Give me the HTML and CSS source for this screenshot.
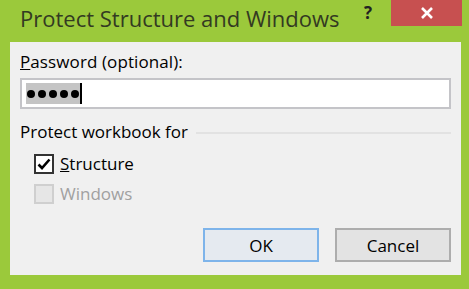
FILE: index.html
```html
<!DOCTYPE html>
<html lang="en">
<head>
  <meta charset="UTF-8">
  <title>Protect Structure and Windows</title>
  <link rel="stylesheet" href="styles.css">
</head>
<body>
  <div class="window">
    <!-- Title bar -->
    <div class="titlebar">
      <span class="title">Protect Structure and Windows</span>
      <span class="help">?</span>
      <button class="close">
        <svg width="14" height="12" viewBox="0 0 14 12">
          <path d="M2 1 L12 11 M12 1 L2 11" stroke="#fff" stroke-width="2.6" fill="none"/>
        </svg>
      </button>
    </div>

    <!-- Client area -->
    <div class="client">
      <label class="field-label"><u>P</u>assword (optional):</label>
      <div class="input-box">
        <span class="selected">
          <span class="dot"></span><span class="dot"></span><span class="dot"></span><span class="dot"></span><span class="dot"></span>
        </span>
        <span class="caret"></span>
      </div>

      <div class="group-row">
        <span>Protect workbook for</span>
        <div class="rule"></div>
      </div>

      <div class="check-row">
        <span class="checkbox">
          <svg width="14" height="12" viewBox="0 0 14 12">
            <path d="M1.5 6.5 L5 10 L12.5 1.5" stroke="#000" stroke-width="2.6" fill="none"/>
          </svg>
        </span>
        <span><u>S</u>tructure</span>
      </div>
      <div class="check-row disabled">
        <span class="checkbox"></span>
        <span>Windows</span>
      </div>

      <div class="buttons">
        <button class="btn default">OK</button>
        <button class="btn">Cancel</button>
      </div>
    </div>
  </div>
</body>
</html>
```

FILE: styles.css
```css
body {
  margin: 0;
  background-color: #9bc93b;
  font-family: 'Open Sans', 'Noto Sans', sans-serif;
}

.window {
  width: 469px;
  height: 289px;
  display: flex;
  flex-direction: column;
}

  .titlebar {
    height: 42px;
    display: flex;
    align-items: flex-start;
  }

  .title {
    margin: 3px 0 0 20px;
    font-size: 22px;
    color: #333a22;
  }

  .help {
    margin: 0 0 0 auto;
    padding-top: 1px;
    font-size: 17px;
    font-weight: bold;
    color: #222;
  }

  .close {
    width: 71px;
    height: 26px;
    margin: 0 7px 0 19px;
    border: none;
    background-color: #c75050;
    display: flex;
    align-items: center;
    justify-content: center;
    padding: 0;
  }

  .client {
    margin: 0 8px 14px 10px;
    flex: 1;
    background-color: #f0f0f0;
    padding: 9px 10px 0 10px;
    display: flex;
    flex-direction: column;
    font-size: 17px;
    line-height: 22px;
    color: #000;
  }

  .field-label {
    height: 22px;
    letter-spacing: 0.1px;
  }

  .input-box {
    margin-top: 5px;
    height: 27px;
    border: 2px solid #c4c4c8;
    background-color: #fff;
    display: flex;
    align-items: center;
    padding-left: 4px;
  }

  .selected {
    background-color: #c4c4c4;
    height: 21px;
    padding: 0 1px;
    display: flex;
    align-items: center;
    gap: 3px;
  }

  .dot {
    width: 8px;
    height: 8px;
    border-radius: 50%;
    background-color: #000;
  }

  .caret {
    width: 2px;
    height: 21px;
    background-color: #000;
  }

  .group-row {
    margin-top: 12px;
    display: flex;
    align-items: center;
  }

  .rule {
    flex: 1;
    height: 2px;
    margin-left: 8px;
    margin-top: 1px;
    background-color: #e2e2e2;
  }

  .check-row {
    margin-top: 11px;
    padding-left: 14px;
    display: flex;
    align-items: center;
    height: 20px;
  }

  .check-row + .check-row {
    margin-top: 10px;
  }

  .checkbox {
    width: 16px;
    height: 16px;
    border: 2px solid #333;
    background-color: #fff;
    margin-right: 6px;
    display: flex;
    align-items: center;
    justify-content: center;
  }

  .disabled {
    color: #a0a0a0;
  }

  .disabled .checkbox {
    border-color: #cfcfcf;
    background-color: #e6e6e6;
  }

  .buttons {
    margin-top: auto;
    margin-bottom: 13px;
    display: flex;
    justify-content: flex-end;
    gap: 16px;
  }

  .btn {
    width: 116px;
    height: 34px;
    font-family: inherit;
    font-size: 17px;
    color: #000;
    background-color: #e3e3e3;
    border: 2px solid #adadad;
  }

  .btn.default {
    border-color: #7eb4ea;
    background-color: #e5eaf0;
  }
```
